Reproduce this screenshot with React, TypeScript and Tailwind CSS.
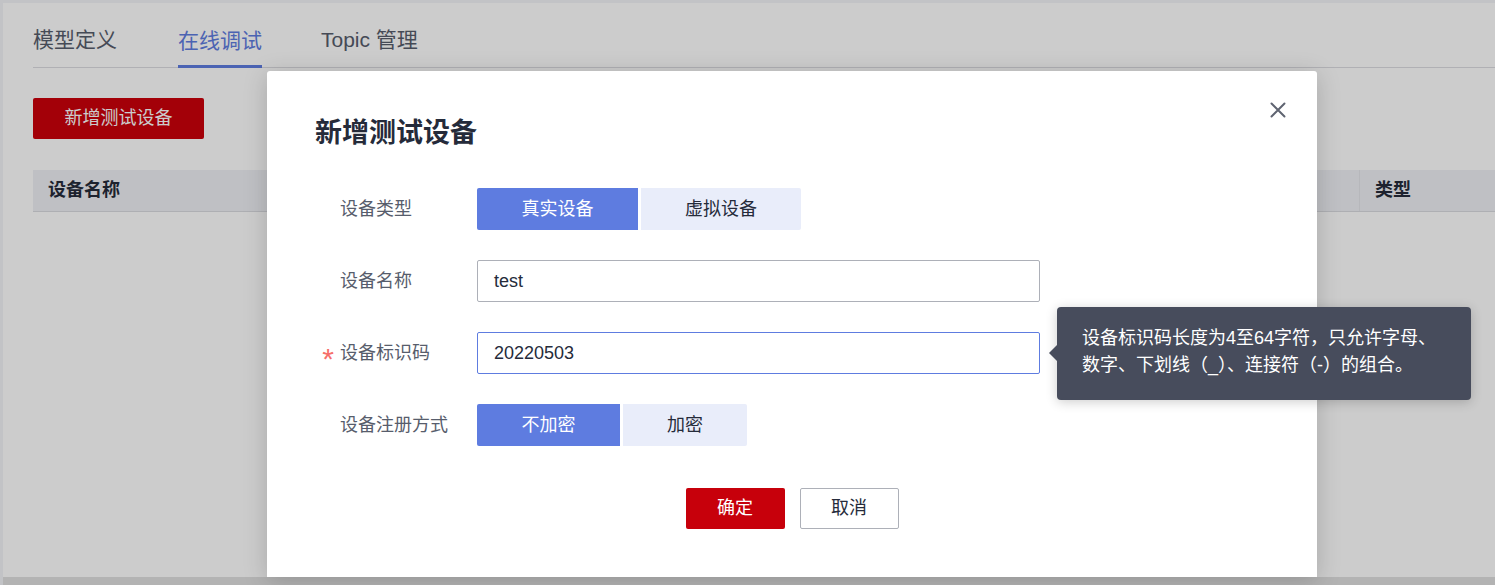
import React from "react";

function Seg({ items, widths }: { items: string[]; widths: string[] }) {
  return (
    <div className="flex gap-[3px]">
      {items.map((t, i) => (
        <div
          key={t}
          className={
            "h-[42px] flex items-center justify-center text-[18px] " +
            widths[i] +
            (i === 0
              ? " bg-[#5e7ce0] text-white rounded-l-[2px]"
              : " bg-[#e9edfa] text-[#252b3a] rounded-r-[2px]")
          }
        >
          {t}
        </div>
      ))}
    </div>
  );
}

function Row({ label, required, children }: { label: string; required?: boolean; children: React.ReactNode }) {
  return (
    <div className="flex items-center h-[42px]">
      <div className="w-[25px] flex justify-end pr-[6px] text-[#f66f6a] text-[30px] leading-none pt-[11px]">
        {required ? "*" : ""}
      </div>
      <div className="w-[137px] text-[18px] text-[#575d6c] leading-[24px]">{label}</div>
      {children}
    </div>
  );
}

export default function App() {
  return (
    <div className="relative w-[1495px] h-[585px] overflow-hidden bg-[#f3f4f8] font-['Liberation_Sans','Noto_Sans_CJK_SC',sans-serif]">
      {/* background page */}
      <div className="flex flex-col h-full pl-[3px] pt-[3px]">
        <div className="flex-1 bg-white pl-[30px] flex flex-col">
          <div className="flex items-end h-[65px] border-b border-[#dcdde2] text-[21px] leading-[28px] text-[#575d6c]">
            <div className="pb-[13px] w-[145px]">模型定义</div>
            <div className="pb-[10px] border-b-[3px] border-[#5e7ce0] text-[#5e7ce0] mb-[-1px]">在线调试</div>
            <div className="pb-[13px] ml-[59px]">Topic 管理</div>
          </div>
          <div className="mt-[30px]">
            <div className="w-[171px] h-[41px] bg-[#cc000b] rounded-[2px] text-white text-[18px] flex items-center justify-center">
              新增测试设备
            </div>
          </div>
          <div className="mt-[31px] h-[42px] bg-[#eff0f5] border-b border-[#dadbe0] flex items-center text-[18px] font-bold text-[#252b3a]">
            <div className="flex-1 pl-[15px]">设备名称</div>
            <div className="w-[136px] h-full border-l border-[#e4e5ea] flex items-center pl-[15px]">类型</div>
          </div>
        </div>
        <div className="h-[8px] bg-[#e0e0e0]" />
      </div>

      {/* overlay */}
      <div className="absolute inset-0 bg-black/20" />

      {/* modal */}
      <div className="absolute left-[267px] top-[71px] w-[1050px] h-[506px] bg-white rounded-t-[3px] shadow-[0_4px_24px_rgba(0,0,0,0.18)] pl-[48px] pt-[44px]">
        <button className="absolute right-[30px] top-[30px] w-[18px] h-[18px] text-[#5f6471]">
          <svg viewBox="0 0 18 18" width="18" height="18" fill="none" stroke="currentColor" strokeWidth="2" strokeLinecap="round">
            <path d="M2.5 2.5 L15.5 15.5 M15.5 2.5 L2.5 15.5" />
          </svg>
        </button>
        <div className="text-[27px] leading-[36px] font-bold text-[#252b3a]">新增测试设备</div>
        <div className="mt-[37px] flex flex-col gap-[30px]">
          <Row label="设备类型">
            <Seg items={["真实设备", "虚拟设备"]} widths={["w-[161px]", "w-[160px]"]} />
          </Row>
          <Row label="设备名称">
            <div className="w-[563px] h-[42px] border border-[#adb0b8] rounded-[2px] flex items-center pl-[16px] text-[18px] text-[#252b3a]">
              test
            </div>
          </Row>
          <Row label="设备标识码" required>
            <div className="w-[563px] h-[42px] border border-[#5e7ce0] rounded-[2px] flex items-center pl-[16px] text-[18px] text-[#252b3a]">
              20220503
            </div>
          </Row>
          <Row label="设备注册方式">
            <Seg items={["不加密", "加密"]} widths={["w-[143px]", "w-[124px]"]} />
          </Row>
        </div>
        <div className="mt-[42px] flex justify-center gap-[15px] pr-[48px]">
          <div className="w-[99px] h-[41px] bg-[#c7000b] rounded-[2px] text-white text-[18px] flex items-center justify-center">确定</div>
          <div className="w-[99px] h-[41px] border border-[#adb0b8] rounded-[2px] text-[#252b3a] text-[18px] flex items-center justify-center">取消</div>
        </div>
      </div>

      {/* tooltip */}
      <div className="absolute left-[1057px] top-[307px] w-[414px] h-[93px] bg-[#474c5c] rounded-[4px] shadow-[0_2px_12px_rgba(0,0,0,0.2)] pl-[25px] pt-[18px] text-white text-[18px] leading-[27px] whitespace-nowrap">
        <div className="absolute left-[-8px] top-[38px] w-0 h-0 border-y-[8px] border-y-transparent border-r-[8px] border-r-[#474c5c]" />
        <div>设备标识码长度为4至64字符，只允许字母、</div>
        <div>数字、下划线（_）、连接符（-）的组合。</div>
      </div>
    </div>
  );
}
